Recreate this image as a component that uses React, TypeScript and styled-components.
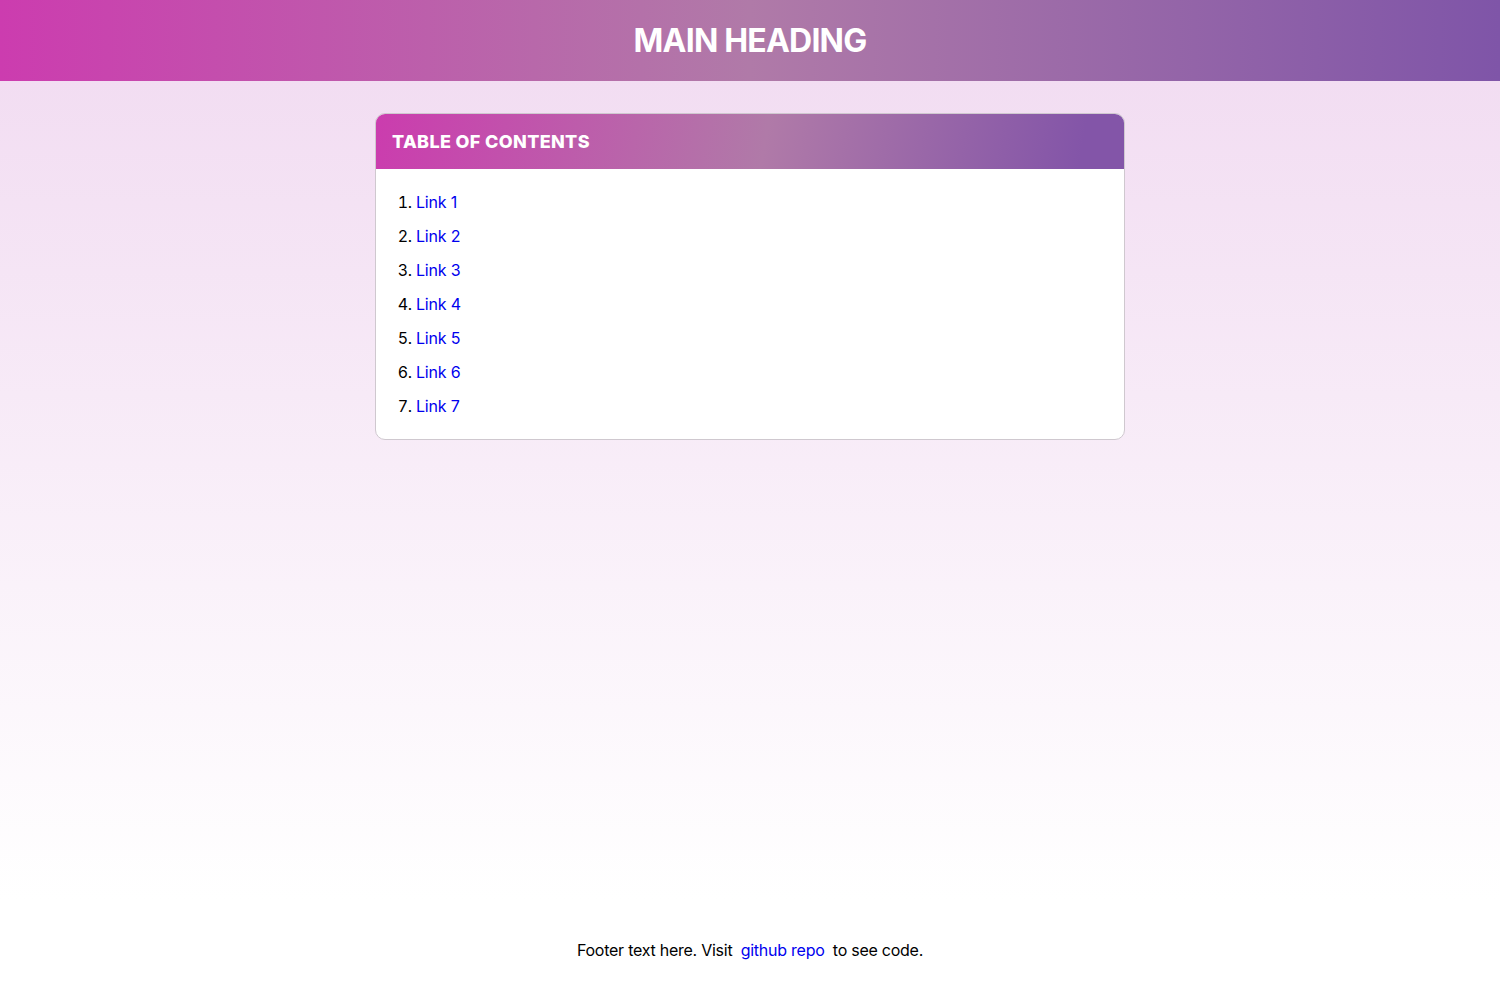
import React from "react";
import styled, { createGlobalStyle } from "styled-components";

const GlobalStyle = createGlobalStyle`
  html, body { margin: 0; padding: 0; }
  body {
    font-family: Inter, "Noto Sans", Arial, sans-serif;
    color: #000;
    background: #fff;
  }
`;

const Page = styled.div`
  min-height: 100vh;
  display: flex;
  flex-direction: column;
  background: linear-gradient(180deg, #f2ddf2 0%, #f2ddf2 8%, #ffffff 90%);
`;

const Header = styled.header`
  height: 81px;
  display: flex;
  align-items: center;
  justify-content: center;
  background: linear-gradient(90deg, #cc3caf 0%, #b07aa8 50%, #7f55a8 100%);
`;

const Title = styled.h1`
  margin: 0;
  font-size: 32px;
  font-weight: 700;
  color: #fff;
  letter-spacing: -0.8px;
`;

const Main = styled.main`
  flex: 1;
  display: flex;
  justify-content: center;
  align-items: flex-start;
  padding-top: 32px;
`;

const Card = styled.section`
  width: 748px;
  background: #fff;
  border: 1px solid #cfc8cf;
  border-radius: 10px;
  overflow: hidden;
`;

const CardHeader = styled.div`
  height: 55px;
  display: flex;
  align-items: center;
  padding: 0 16px;
  background: linear-gradient(100deg, #cb3cae 0%, #b07aa8 52%, #8355a8 94%);
`;

const CardTitle = styled.h2`
  margin: 0;
  font-size: 18px;
  font-weight: 800;
  color: #fff;
  letter-spacing: 0.35px;
`;

const List = styled.ol`
  margin: 0;
  padding: 21px 0 21px 40px;
  font-size: 16px;
  letter-spacing: -0.2px;
`;

const Item = styled.li`
  line-height: 24px;
  & + & { margin-top: 10px; }
`;

const Link = styled.a`
  color: #0000ee;
  text-decoration: none;
`;

const Footer = styled.footer`
  text-align: center;
  font-size: 16px;
  line-height: 20px;
  letter-spacing: -0.25px;
  padding: 0 0 40px;
`;

const FooterLink = styled.a`
  color: #0000ee;
  text-decoration: none;
  margin: 0 4px;
`;

export default function App() {
  const links = [1, 2, 3, 4, 5, 6, 7];
  return (
    <>
      <GlobalStyle />
      <Page>
        <Header>
          <Title>MAIN HEADING</Title>
        </Header>
        <Main>
          <Card>
            <CardHeader>
              <CardTitle>TABLE OF CONTENTS</CardTitle>
            </CardHeader>
            <List>
              {links.map((n) => (
                <Item key={n}>
                  <Link href={`#link-${n}`}>Link {n}</Link>
                </Item>
              ))}
            </List>
          </Card>
        </Main>
        <Footer>
          Footer text here. Visit <FooterLink href="#">github repo</FooterLink> to see code.
        </Footer>
      </Page>
    </>
  );
}
